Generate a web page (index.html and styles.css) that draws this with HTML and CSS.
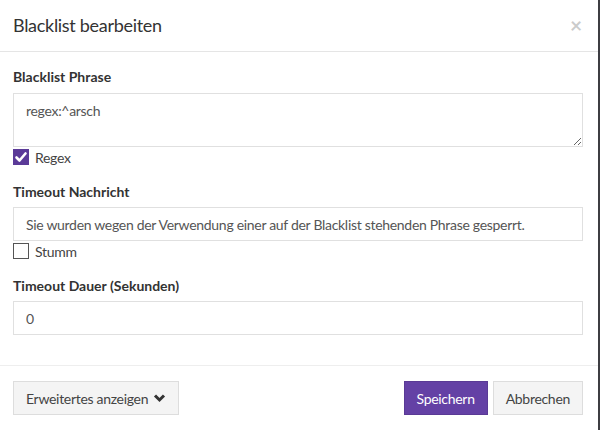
FILE: index.html
```html
<!DOCTYPE html>
<html lang="de">
<head>
<meta charset="utf-8">
<title>Blacklist bearbeiten</title>
<link rel="stylesheet" href="styles.css">
</head>
<body>
<div class="modal">
  <div class="modal-header">
    <h4 class="modal-title">Blacklist bearbeiten</h4>
    <span class="close">×</span>
  </div>
  <div class="modal-body">
    <div class="form-group">
      <label class="field-label">Blacklist Phrase</label>
      <textarea class="form-control area">regex:^arsch</textarea>
      <div class="check-row">
        <span class="box checked"><svg width="16" height="16" viewBox="0 0 16 16"><polyline points="3.5,8.5 6.5,11.5 12.5,4.5" fill="none" stroke="#fff" stroke-width="2.6" stroke-linecap="round" stroke-linejoin="round"/></svg></span>
        <span class="check-text">Regex</span>
      </div>
    </div>
    <div class="form-group">
      <label class="field-label">Timeout Nachricht</label>
      <input class="form-control" type="text" value="Sie wurden wegen der Verwendung einer auf der Blacklist stehenden Phrase gesperrt.">
      <div class="check-row">
        <span class="box"></span>
        <span class="check-text">Stumm</span>
      </div>
    </div>
    <div class="form-group">
      <label class="field-label">Timeout Dauer (Sekunden)</label>
      <input class="form-control" type="text" value="0">
    </div>
  </div>
  <div class="modal-footer">
    <button class="btn btn-default">Erweitertes anzeigen <svg class="chev" width="13" height="10" viewBox="0 0 13 10"><polyline points="2,2.5 6.5,7 11,2.5" fill="none" stroke="#333" stroke-width="3"/></svg></button>
    <div class="actions">
      <button class="btn btn-primary">Speichern</button>
      <button class="btn btn-default">Abbrechen</button>
    </div>
  </div>
</div>
</body>
</html>
```
FILE: styles.css
```css
html, body {
  margin: 0;
  padding: 0;
}
body {
  background: #3d3d42;
  font-family: Lato, "Open Sans", sans-serif;
  font-size: 14px;
  letter-spacing: -0.3px;
  color: #333;
  width: 600px;
  height: 430px;
  overflow: hidden;
}
.modal {
  width: 598px;
  height: 430px;
  background: #fff;
  display: flex;
  flex-direction: column;
}
.modal-header {
  height: 52px;
  box-sizing: border-box;
  border-bottom: 1px solid #e5e5e5;
  padding: 0 16px 2px 13px;
  display: flex;
  align-items: center;
  justify-content: space-between;
}
.modal-title {
  margin: 0;
  font-size: 18px;
  font-weight: 400;
  color: #333;
}
.close {
  font-size: 21px;
  font-weight: 700;
  color: #000;
  opacity: 0.2;
  line-height: 1;
}
.modal-body {
  padding: 15px 15px 15px 13px;
}
.form-group {
  margin-bottom: 15px;
}
.field-label {
  display: block;
  font-weight: 700;
  letter-spacing: 0;
  line-height: 20px;
  margin-bottom: 5px;
}
.form-group:first-child .field-label {
  margin-bottom: 6px;
}
.form-control {
  display: block;
  width: 100%;
  box-sizing: border-box;
  height: 34px;
  padding: 6px 12px;
  font-family: inherit;
  font-size: 14px;
  letter-spacing: -0.3px;
  color: #555;
  border: 1px solid #e0e0e0;
  border-radius: 0;
  background: #fff;
  margin: 0;
  outline: none;
}
.area {
  height: 54px;
  padding-top: 8px;
  resize: vertical;
}
.check-row {
  display: flex;
  align-items: center;
  height: 20px;
  gap: 6px;
}
.box {
  width: 16px;
  height: 16px;
  box-sizing: border-box;
  border: 1px solid #555;
  background: #fff;
  display: flex;
}
.box.checked {
  background: #5b3a98;
  border-color: #5b3a98;
}
.box.checked svg {
  margin: -1px;
}
.check-text {
  color: #444;
}
.modal-footer {
  border-top: 1px solid #eee;
  padding: 15px 15px 15px 13px;
  display: flex;
  justify-content: space-between;
  align-items: center;
}
.actions {
  display: flex;
  gap: 5px;
}
.btn {
  height: 34px;
  box-sizing: border-box;
  padding: 6px 12px;
  font-family: inherit;
  font-size: 14px;
  letter-spacing: -0.3px;
  border: 1px solid transparent;
  border-radius: 0;
  display: inline-flex;
  align-items: center;
  gap: 5px;
  cursor: pointer;
}
.btn-default {
  background: #f4f4f4;
  border-color: #ddd;
  color: #444;
}
.btn-primary {
  background: #6441a5;
  border-color: #5a3a95;
  color: #fff;
}
```
